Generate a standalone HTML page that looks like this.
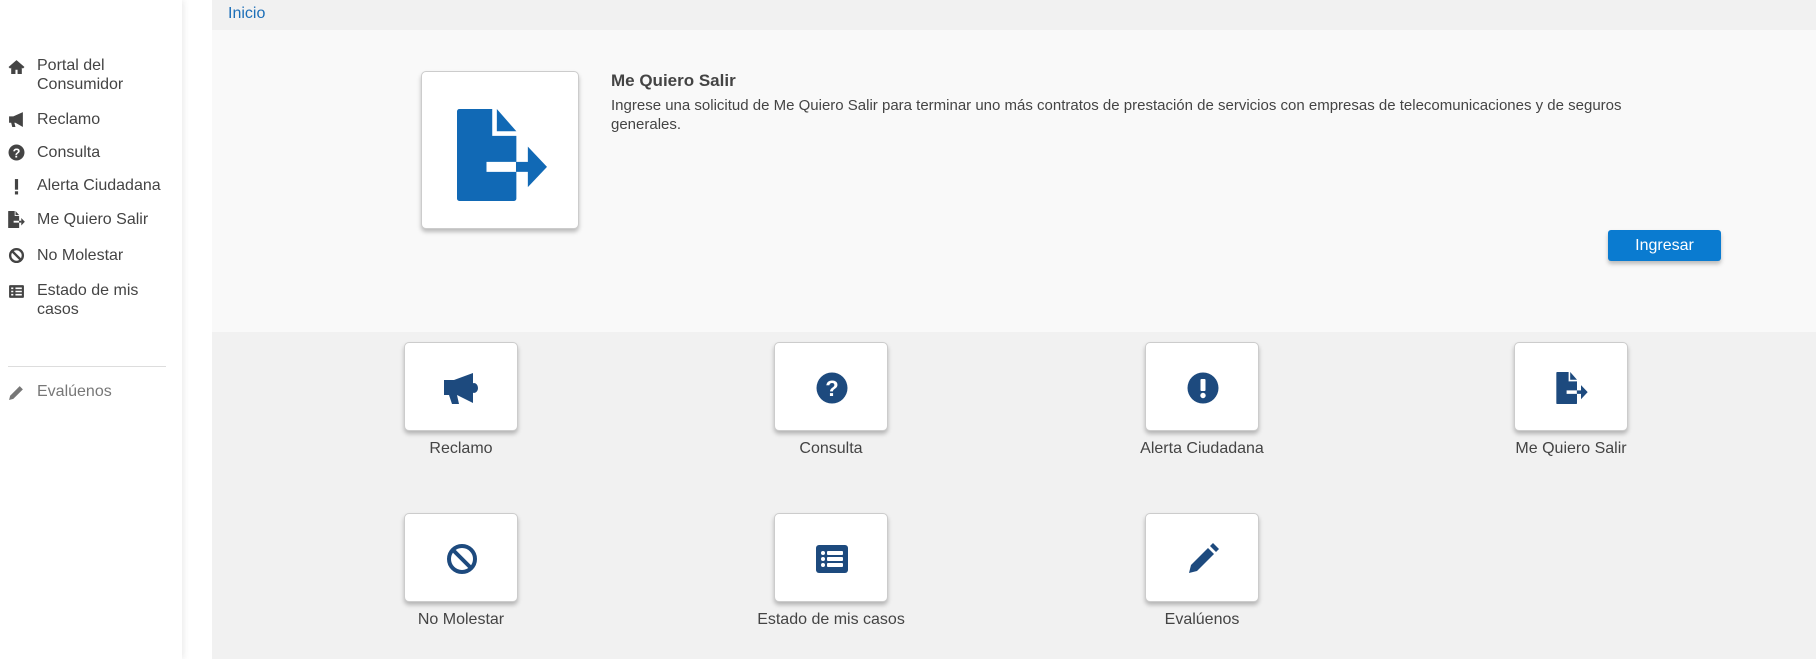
<!DOCTYPE html>
<html><head><meta charset="utf-8"><style>
*{margin:0;padding:0;box-sizing:border-box}
body{width:1816px;height:659px;overflow:hidden;background:#fff;font-family:"Liberation Sans",sans-serif;position:relative;color:#444}
.side{position:absolute;left:0;top:0;width:182px;height:659px;background:#fff;box-shadow:2px 0 6px rgba(0,0,0,.08)}
.it{position:absolute;left:37px;font-size:16px;line-height:19px;color:#444}
.ic{position:absolute;left:8px;width:17px;height:17px}
.hr{position:absolute;left:8px;top:366px;width:158px;border-top:1px solid #ddd}
.crumb{position:absolute;left:212px;top:0;width:1604px;height:30px;background:#f1f1f1}
.crumb span{position:absolute;left:16px;top:5px;color:#1c6fb8;font-size:16px}
.top{position:absolute;left:212px;top:30px;width:1604px;height:302px;background:#f9f9f9}
.grid{position:absolute;left:212px;top:332px;width:1604px;height:327px;background:#f1f1f1}
.card{position:absolute;background:#fff;border:1px solid #ccc;border-radius:5px;box-shadow:0 3px 4px rgba(0,0,0,.25)}
.lbl{position:absolute;width:300px;text-align:center;font-size:16px;color:#444}
.title{position:absolute;left:611px;top:71px;font-size:17px;font-weight:bold;color:#444}
.desc{position:absolute;left:611px;top:96px;width:1120px;font-size:15px;line-height:19px;color:#444}
.btn{position:absolute;left:1608px;top:230px;width:113px;height:31px;background:#0a7bd0;border-radius:3px;color:#fff;font-size:16px;text-align:center;line-height:31px;box-shadow:0 3px 4px rgba(0,0,0,.25)}
</style></head><body>
<svg width="0" height="0" style="position:absolute"><defs><g id="doc"><path d="M0 6a6 6 0 0 1 6-6H92V70H155V138H77V164H155V234a6 6 0 0 1-6 6H6a6 6 0 0 1-6-6z"/><path d="M104 0L155 58H104z"/><rect x="154" y="138" width="32" height="26"/><path d="M185 98L235 151L185 204z"/></g></defs></svg>
<div class="side">
<svg class="ic" style="top:58px" viewBox="0 0 16 16"><path d="M8 2L0.5 8.5 2 10 3 9v6h4v-4h2v4h4V9l1 1 1.5-1.5z" fill="#444"/></svg>
<div class="it" style="top:56px">Portal del<br>Consumidor</div>
<svg class="ic" style="top:111px" viewBox="0 0 16 16"><path d="M1 5h4l9-4v14L7 11H6l1 4H4L3 11H1z" fill="#444"/></svg>
<div class="it" style="top:110px">Reclamo</div>
<svg class="ic" style="top:144px" viewBox="0 0 16 16"><circle cx="8" cy="8" r="7.5" fill="#444"/><text x="8" y="12.5" font-size="12" font-weight="bold" fill="#fff" text-anchor="middle" font-family="Liberation Sans">?</text></svg>
<div class="it" style="top:143px">Consulta</div>
<svg class="ic" style="top:178px" viewBox="0 0 16 16"><rect x="6.5" y="1" width="3" height="10" fill="#444"/><rect x="6.5" y="12.5" width="3" height="3" fill="#444"/></svg>
<div class="it" style="top:176px">Alerta Ciudadana</div>
<svg class="ic" style="top:211px" viewBox="0 0 235 240"><use href="#doc" fill="#444"/></svg>
<div class="it" style="top:210px">Me Quiero Salir</div>
<svg class="ic" style="top:247px" viewBox="0 0 16 16"><circle cx="8" cy="8" r="6" fill="none" stroke="#444" stroke-width="2.2"/><path d="M4 4l8 8" stroke="#444" stroke-width="2.2"/></svg>
<div class="it" style="top:246px">No Molestar</div>
<svg class="ic" style="top:283px" viewBox="0 0 16 16"><rect x="1" y="2" width="14" height="12" rx="1" fill="#444"/><path d="M3 5h2M7 5h6M3 8h2M7 8h6M3 11h2M7 11h6" stroke="#fff" stroke-width="1.5"/></svg>
<div class="it" style="top:281px">Estado de mis<br>casos</div>
<div class="hr"></div>
<svg class="ic" style="top:384px" viewBox="0 0 16 16"><path d="M1 15l1-4 9-9 3 3-9 9z" fill="#777"/></svg>
<div class="it" style="top:382px;color:#777">Evalúenos</div>
</div>
<div class="crumb"><span>Inicio</span></div>
<div class="top"></div>
<div class="grid"></div>
<div class="card" style="left:421px;top:71px;width:158px;height:158px">
<svg style="position:absolute;left:35px;top:37px" width="90" height="92" viewBox="0 0 235 240"><use href="#doc" fill="#1169b5"/></svg>
</div>
<div class="title">Me Quiero Salir</div>
<div class="desc">Ingrese una solicitud de Me Quiero Salir para terminar uno más contratos de prestación de servicios con empresas de telecomunicaciones y de seguros<br>generales.</div>
<div class="btn">Ingresar</div>

<div class="card" style="left:404px;top:342px;width:114px;height:89px"><svg style="position:absolute;left:38px;top:30px" width="38" height="32" viewBox="0 0 36 32"><path d="M0 7h10L29 0v30L13 22l2 9H8L5 22H0z" fill="#1d4a7e"/><ellipse cx="30" cy="15" rx="4" ry="5" fill="#1d4a7e"/></svg></div>
<div class="lbl" style="left:311px;top:440px">Reclamo</div>
<div class="card" style="left:774px;top:342px;width:114px;height:89px"><svg style="position:absolute;left:41px;top:29px" width="32" height="32" viewBox="0 0 32 32"><circle cx="16" cy="16" r="15.5" fill="#1d4a7e"/><text x="16" y="24" font-size="22" font-weight="bold" fill="#fff" text-anchor="middle" font-family="Liberation Sans">?</text></svg></div>
<div class="lbl" style="left:681px;top:440px">Consulta</div>
<div class="card" style="left:1145px;top:342px;width:114px;height:89px"><svg style="position:absolute;left:41px;top:29px" width="32" height="32" viewBox="0 0 32 32"><circle cx="16" cy="16" r="15.5" fill="#1d4a7e"/><rect x="13.5" y="7" width="5" height="12" rx="1" fill="#fff"/><circle cx="16" cy="23.5" r="2.7" fill="#fff"/></svg></div>
<div class="lbl" style="left:1052px;top:440px">Alerta Ciudadana</div>
<div class="card" style="left:1514px;top:342px;width:114px;height:89px"><svg style="position:absolute;left:38px;top:29px" width="38" height="32" viewBox="0 0 235 240" preserveAspectRatio="xMidYMid meet"><use href="#doc" fill="#1d4a7e"/></svg></div>
<div class="lbl" style="left:1421px;top:440px">Me Quiero Salir</div>

<div class="card" style="left:404px;top:513px;width:114px;height:89px"><svg style="position:absolute;left:41px;top:29px" width="32" height="32" viewBox="0 0 32 32"><circle cx="16" cy="16" r="13" fill="none" stroke="#1d4a7e" stroke-width="4"/><path d="M7 7l18 18" stroke="#1d4a7e" stroke-width="4"/></svg></div>
<div class="lbl" style="left:311px;top:611px">No Molestar</div>
<div class="card" style="left:774px;top:513px;width:114px;height:89px"><svg style="position:absolute;left:41px;top:31px" width="32" height="28" viewBox="0 0 32 28"><rect width="32" height="28" rx="3" fill="#1d4a7e"/><g fill="#fff"><circle cx="7" cy="8" r="2"/><circle cx="7" cy="14" r="2"/><circle cx="7" cy="20" r="2"/><rect x="11" y="6" width="16" height="4" rx="1"/><rect x="11" y="12" width="16" height="4" rx="1"/><rect x="11" y="18" width="16" height="4" rx="1"/></g></svg></div>
<div class="lbl" style="left:681px;top:611px">Estado de mis casos</div>
<div class="card" style="left:1145px;top:513px;width:114px;height:89px"><svg style="position:absolute;left:41px;top:29px" width="32" height="32" viewBox="0 0 32 32"><path d="M2 30l2-8L21 5l6 6L10 28z" fill="#1d4a7e"/><path d="M23 3l3-3 6 6-3 3z" fill="#1d4a7e"/></svg></div>
<div class="lbl" style="left:1052px;top:611px">Evalúenos</div>
</body></html>
